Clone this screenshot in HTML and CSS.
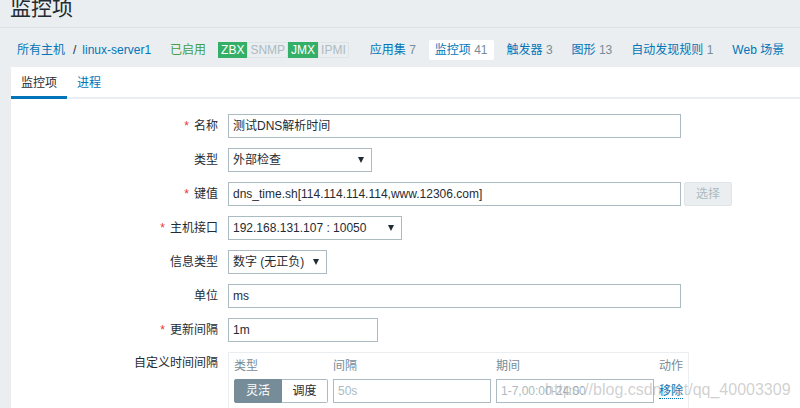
FILE: index.html
```html
<!DOCTYPE html>
<html lang="zh">
<head>
<meta charset="utf-8">
<title>监控项</title>
<link rel="stylesheet" href="styles.css">
</head>
<body>
<header class="page-header">
  <h1 class="page-title">监控项</h1>
</header>
<nav class="host-nav">
  <a class="crumb link">所有主机</a>
  <span class="sep">/</span>
  <a class="crumb link">linux-server1</a>
  <span class="status">已启用</span>
  <span class="badges">
    <span class="badge on">ZBX</span><span class="badge off">SNMP</span><span class="badge on">JMX</span><span class="badge off">IPMI</span>
  </span>
  <ul class="host-tabs">
    <li class="htab"><a class="link">应用集</a> <span class="count">7</span></li>
    <li class="htab selected"><a class="link">监控项</a> <span class="count">41</span></li>
    <li class="htab"><a class="link">触发器</a> <span class="count">3</span></li>
    <li class="htab"><a class="link">图形</a> <span class="count">13</span></li>
    <li class="htab"><a class="link">自动发现规则</a> <span class="count">1</span></li>
    <li class="htab"><a class="link">Web 场景</a></li>
  </ul>
</nav>
<main class="panel">
  <ul class="tabs">
    <li class="tab active">监控项</li>
    <li class="tab">进程</li>
  </ul>
  <form class="form">
    <div class="row">
      <label class="label"><span class="req">*</span>名称</label>
      <div class="field"><div class="input w-std">测试DNS解析时间</div></div>
    </div>
    <div class="row">
      <label class="label">类型</label>
      <div class="field"><div class="select w-type"><span>外部检查</span><i class="arrow"></i></div></div>
    </div>
    <div class="row">
      <label class="label"><span class="req">*</span>键值</label>
      <div class="field"><div class="input w-std">dns_time.sh[114.114.114.114,www.12306.com]</div><span class="btn-disabled">选择</span></div>
    </div>
    <div class="row">
      <label class="label"><span class="req">*</span>主机接口</label>
      <div class="field"><div class="select w-iface"><span>192.168.131.107 : 10050</span><i class="arrow"></i></div></div>
    </div>
    <div class="row">
      <label class="label">信息类型</label>
      <div class="field"><div class="select w-info"><span>数字 (无正负)</span><i class="arrow"></i></div></div>
    </div>
    <div class="row">
      <label class="label">单位</label>
      <div class="field"><div class="input w-std">ms</div></div>
    </div>
    <div class="row">
      <label class="label"><span class="req">*</span>更新间隔</label>
      <div class="field"><div class="input w-delay">1m</div></div>
    </div>
    <div class="row row-top">
      <label class="label label-top">自定义时间间隔</label>
      <div class="field">
        <div class="intervals">
          <div class="ihead">类型</div>
          <div class="ihead">间隔</div>
          <div class="ihead">期间</div>
          <div class="ihead">动作</div>
          <div class="segmented"><span class="seg seg-on">灵活</span><span class="seg">调度</span></div>
          <div class="input placeholder">50s</div>
          <div class="input placeholder">1-7,00:00-24:00</div>
          <div class="remove"><a class="link dotted">移除</a></div>
        </div>
      </div>
    </div>
  </form>
</main>
<div class="watermark">https://blog.csdn.net/qq_40003309</div>
</body>
</html>
```
FILE: styles.css
```css
* { box-sizing: border-box; }
html, body { margin: 0; padding: 0; }
body {
  width: 800px;
  height: 408px;
  overflow: hidden;
  background: #ebeef0;
  color: #1f2c33;
  font: 12px/16px "Liberation Sans", "Noto Sans CJK SC", sans-serif;
  position: relative;
}
ul { list-style: none; margin: 0; padding: 0; }
a { text-decoration: none; }
.link { color: #0275b8; }

.page-header {
  height: 28px;
  border-bottom: 1px solid #dce1e4;
  overflow: hidden;
}
.page-title {
  margin: -3px 0 0 10px;
  font-size: 21px;
  line-height: 21px;
  font-weight: normal;
  color: #1f2c33;
}

.host-nav {
  display: flex;
  align-items: center;
  height: 20px;
  margin-top: 12px;
  padding-left: 17px;
  white-space: nowrap;
}
.sep { margin: 0 6px 0 8px; color: #1f2c33; }
.status { color: #429e47; margin-left: 19px; }
.badges { display: flex; margin-left: 12px; }
.badge {
  height: 16px;
  line-height: 14px;
  padding: 0 2px;
  border: 1px solid #dfe4e7;
}
.badge.on { background: #34af67; border-color: #34af67; color: #fff; }
.badge.off { background: #ebeef0; color: #acbbc2; }
.host-tabs { display: flex; margin-left: 15px; gap: 7px; }
.htab { padding: 0 6px; height: 20px; line-height: 20px; }
.htab.selected { background: #fff; border-radius: 2px; }
.count { color: #768d99; }

.panel {
  margin: 7px 0 0 11px;
  background: #fff;
  height: 400px;
}
.tabs {
  display: flex;
  height: 32px;
  border-bottom: 2px solid #ebeef0;
}
.tab {
  padding: 3px 10px 0;
  line-height: 26px;
  height: 29px;
  color: #0275b8;
}
.tab.active {
  color: #1f2c33;
  border-bottom: 3px solid #0275b8;
  height: 32px;
}

.form { padding-top: 10px; }
.row {
  display: flex;
  align-items: center;
  padding: 5px 0;
}
.row-top { align-items: flex-start; }
.label {
  width: 217px;
  padding-right: 10px;
  text-align: right;
  flex: none;
}
.label-top { padding-top: 3px; }
.req { color: #e33734; margin-right: 5px; }
.field { display: flex; align-items: center; }
.input {
  height: 24px;
  line-height: 22px;
  border: 1px solid #acbbc2;
  padding: 0 4px;
  background: #fff;
  white-space: nowrap;
  overflow: hidden;
}
.w-std { width: 453px; }
.w-delay { width: 150px; }
.select {
  height: 24px;
  border: 1px solid #acbbc2;
  padding: 0 7px 0 4px;
  display: flex;
  align-items: center;
  justify-content: space-between;
  white-space: nowrap;
}
.w-type { width: 144px; }
.w-iface { width: 174px; }
.w-info { width: 99px; }
.arrow {
  display: block;
  width: 0; height: 0;
  border-left: 3px solid transparent;
  border-right: 3px solid transparent;
  border-top: 6px solid #1f2c33;
}
.btn-disabled {
  margin-left: 3px;
  width: 48px;
  height: 24px;
  line-height: 22px;
  text-align: center;
  background: #ebeef0;
  border: 1px solid #dfe4e7;
  border-radius: 2px;
  color: #acbbc2;
}

.intervals {
  width: 461px;
  border: 1px solid #ebeef0;
  padding: 4px 5px 6px;
  display: grid;
  grid-template-columns: 94px 158px 158px auto;
  column-gap: 5px;
  row-gap: 4px;
}
.ihead { color: #768d99; line-height: 18px; }
.segmented { display: flex; height: 24px; }
.seg {
  width: 46px;
  line-height: 22px;
  text-align: center;
  border: 1px solid #acbbc2;
  border-left: none;
  border-radius: 0 2px 2px 0;
}
.seg-on {
  width: 48px;
  background: #768d99;
  border: 1px solid #768d99;
  color: #fff;
  border-radius: 2px 0 0 2px;
}
.placeholder { color: #acbbc2; }
.remove { display: flex; align-items: center; }
.dotted { border-bottom: 1px dotted #0275b8; line-height: 14px; }

.watermark {
  position: absolute;
  left: 545px;
  top: 382px;
  font-size: 16px;
  line-height: 16px;
  color: rgba(150, 150, 150, 0.45);
  white-space: nowrap;
  pointer-events: none;
}
```
